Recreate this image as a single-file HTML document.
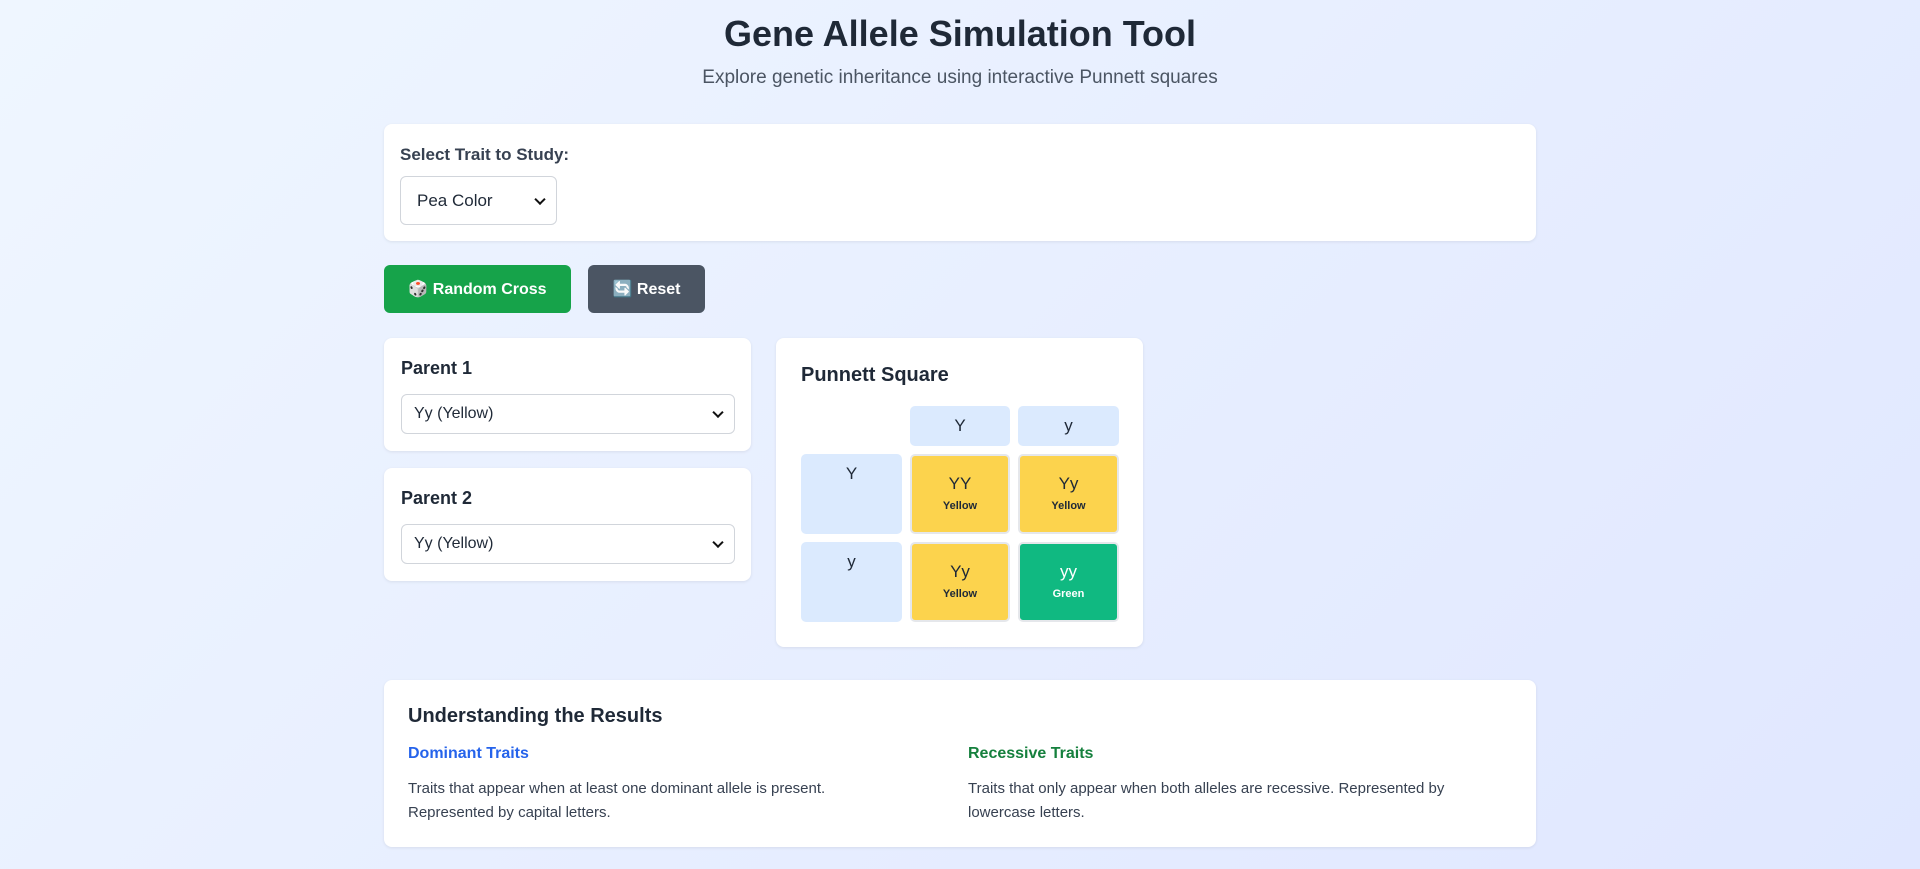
<!DOCTYPE html>
<html><head><meta charset="utf-8"><style>
*{box-sizing:border-box;margin:0;padding:0}
body{width:1920px;height:869px;overflow:hidden;font-family:"Liberation Sans",sans-serif;background:linear-gradient(135deg,#eff6ff,#e0e7ff);color:#1f2937;position:relative}
.abs{position:absolute}
.card{position:absolute;background:#fff;border-radius:8px;box-shadow:0 1px 3px rgba(0,0,0,.08)}
h1{position:absolute;top:13px;width:100%;text-align:center;font-size:36px;font-weight:bold;color:#1f2937}
.sub{position:absolute;top:67px;width:100%;text-align:center;font-size:19px;color:#4b5563}
.sel{position:absolute;border:1px solid #d1d5db;border-radius:6px;background:#fff;font-size:17px;color:#1f2937;padding-left:12px;display:flex;align-items:center}
.sel:after{content:"";position:absolute;right:12px;top:50%;width:6px;height:6px;border-right:2px solid #111;border-bottom:2px solid #111;transform:translateY(-70%) rotate(45deg)}
.btn{position:absolute;top:265px;height:48px;border-radius:6px;color:#fff;font-weight:bold;font-size:16px;display:flex;align-items:center;justify-content:center}
.c{position:absolute;border-radius:5px;text-align:center}
.h{background:#dbeafe;font-size:17px;color:#1f2937}
.o{border:2px solid #e5e7eb;font-size:17px}
.o small{display:block;font-size:11px;font-weight:bold;margin-top:6px}
</style></head><body>
<h1>Gene Allele Simulation Tool</h1>
<div class="sub">Explore genetic inheritance using interactive Punnett squares</div>

<div class="card" style="left:384px;top:124px;width:1152px;height:117px">
<div class="abs" style="left:16px;top:21px;font-size:17px;font-weight:bold;color:#374151">Select Trait to Study:</div>
<div class="sel" style="left:16px;top:52px;width:157px;height:49px;padding-left:16px">Pea Color</div>
</div>

<div class="btn" style="left:384px;width:187px;background:#16a34a">🎲&nbsp;Random Cross</div>
<div class="btn" style="left:588px;width:117px;background:#4b5563">🔄&nbsp;Reset</div>

<div class="card" style="left:384px;top:338px;width:367px;height:113px">
<div class="abs" style="left:17px;top:20px;font-size:18px;font-weight:bold">Parent 1</div>
<div class="sel" style="left:17px;top:56px;width:334px;height:40px;font-size:16px">Yy (Yellow)</div>
</div>
<div class="card" style="left:384px;top:468px;width:367px;height:113px">
<div class="abs" style="left:17px;top:20px;font-size:18px;font-weight:bold">Parent 2</div>
<div class="sel" style="left:17px;top:56px;width:334px;height:40px;font-size:16px">Yy (Yellow)</div>
</div>

<div class="card" style="left:776px;top:338px;width:367px;height:309px">
<div class="abs" style="left:25px;top:26px;font-size:20px;font-weight:bold">Punnett Square</div>
<div class="c h" style="left:134px;top:68px;width:100px;height:40px;line-height:40px">Y</div>
<div class="c h" style="left:242px;top:68px;width:101px;height:40px;line-height:40px">y</div>
<div class="c h" style="left:25px;top:116px;width:101px;height:80px;padding-top:10px">Y</div>
<div class="c h" style="left:25px;top:204px;width:101px;height:80px;padding-top:10px">y</div>
<div class="c o" style="left:134px;top:116px;width:100px;height:80px;background:#fcd34d;padding-top:18px">YY<small>Yellow</small></div>
<div class="c o" style="left:242px;top:116px;width:101px;height:80px;background:#fcd34d;padding-top:18px">Yy<small>Yellow</small></div>
<div class="c o" style="left:134px;top:204px;width:100px;height:80px;background:#fcd34d;padding-top:18px">Yy<small>Yellow</small></div>
<div class="c o" style="left:242px;top:204px;width:101px;height:80px;background:#10b981;color:#fff;padding-top:18px">yy<small>Green</small></div>
</div>

<div class="card" style="left:384px;top:680px;width:1152px;height:167px">
<div class="abs" style="left:24px;top:25px;font-size:20px;font-weight:bold">Understanding the Results</div>
<div class="abs" style="left:24px;top:65px;font-size:16px;font-weight:bold;color:#2563eb">Dominant Traits</div>
<div class="abs" style="left:24px;top:97px;width:500px;font-size:15px;line-height:24px;color:#374151">Traits that appear when at least one dominant allele is present. Represented by capital letters.</div>
<div class="abs" style="left:584px;top:65px;font-size:16px;font-weight:bold;color:#15803d">Recessive Traits</div>
<div class="abs" style="left:584px;top:97px;width:530px;font-size:15px;line-height:24px;color:#374151">Traits that only appear when both alleles are recessive. Represented by lowercase letters.</div>
</div>
</body></html>
